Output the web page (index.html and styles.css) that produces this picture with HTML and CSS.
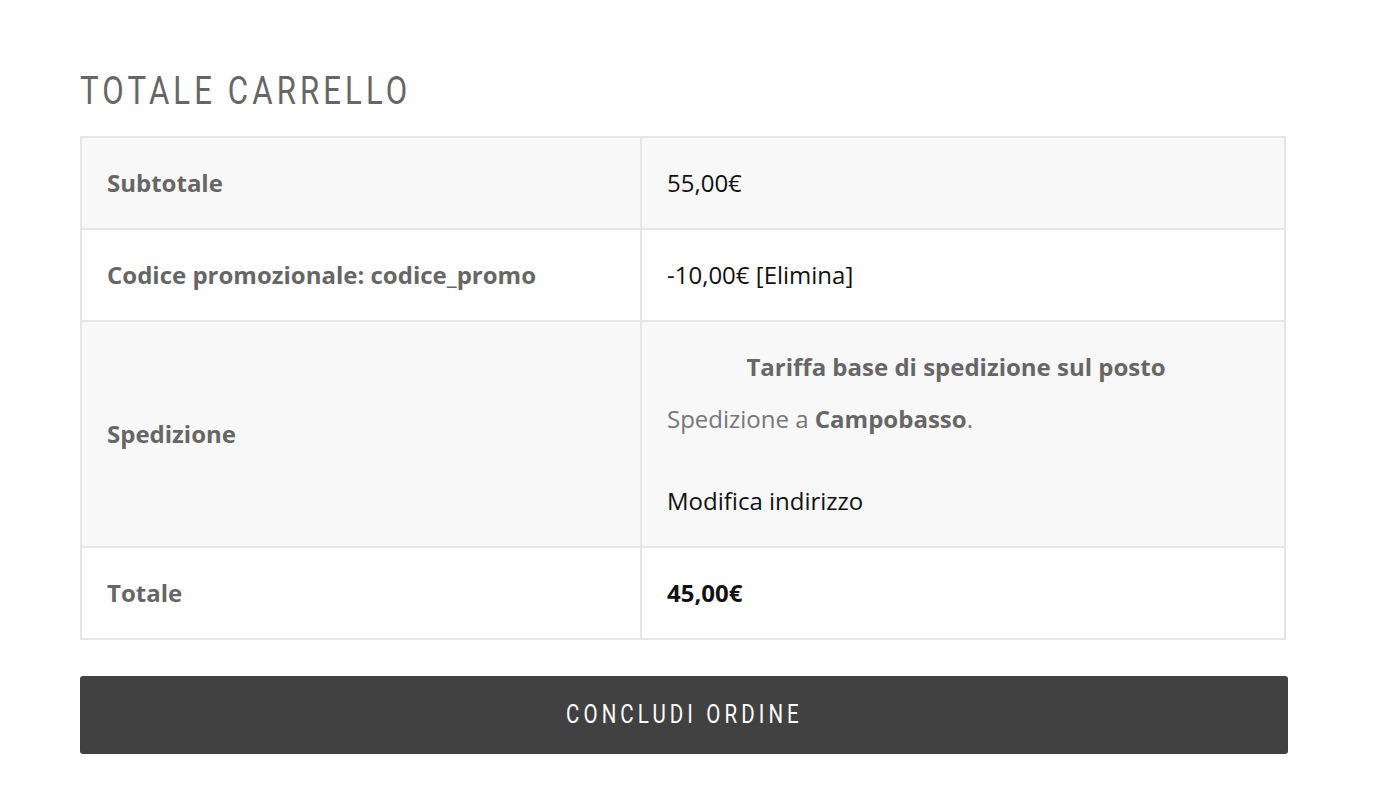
FILE: index.html
```html
<!DOCTYPE html>
<html lang="it">
<head>
  <meta charset="UTF-8" />
  <meta name="viewport" content="width=device-width, initial-scale=1" />
  <title>Totale carrello</title>
  <link rel="stylesheet" href="styles.css">
</head>
<body>
  <div class="cart-totals">
    <h2><span>Totale carrello</span></h2>

    <table class="totals-table">
      <tr class="odd">
        <th>Subtotale</th>
        <td>55,00€</td>
      </tr>
      <tr>
        <th>Codice promozionale: codice_promo</th>
        <td>-10,00€ [Elimina]</td>
      </tr>
      <tr class="odd">
        <th>Spedizione</th>
        <td>
          <div class="method">Tariffa base di spedizione sul posto</div>
          <p class="destination">Spedizione a <strong>Campobasso</strong>.</p>
          <a class="change-address" href="#">Modifica indirizzo</a>
        </td>
      </tr>
      <tr>
        <th>Totale</th>
        <td><strong class="total">45,00€</strong></td>
      </tr>
    </table>

    <a class="checkout-btn" href="#"><span>Concludi ordine</span></a>
  </div>
</body>
</html>
```

FILE: styles.css
```css
body {
  margin: 0;
  font-family: "Open Sans", Arial, sans-serif;
  background: #fff;
}
.cart-totals {
  padding: 70px 98px 40px 80px;
}
h2 {
  margin: 0 0 24px;
  font-family: Roboto, Arial, sans-serif;
  font-weight: 400;
  font-size: 38px;
  line-height: 42px;
  letter-spacing: 5px;
  text-transform: uppercase;
  color: #666;
}
/* narrow the letters, the theme uses a condensed face */
h2 span,
.checkout-btn span {
  display: inline-block;
  transform: scaleX(0.82);
}
h2 span {
  transform-origin: left center;
}
.totals-table {
  width: 1206px;
  border-collapse: collapse;
  border: 2px solid #e6e6e6;
  font-size: 24px;
  line-height: 30px;
}
.totals-table th,
.totals-table td {
  border: 2px solid #e6e6e6;
  padding: 30px 25px;
  text-align: left;
  vertical-align: middle;
}
.totals-table th {
  width: 508px;
  font-weight: 700;
  color: #666;
}
.totals-table td {
  color: #111;
}
.totals-table tr.odd {
  background: #f8f8f8;
}
.method {
  text-align: center;
  font-weight: 700;
  color: #666;
  margin-bottom: 22px;
  padding-right: 14px;
}
.destination {
  margin: 0 0 52px;
  color: #777;
}
.destination strong {
  color: #666;
}
.change-address {
  color: #111;
  text-decoration: none;
}
.total {
  color: #111;
}
.checkout-btn {
  display: block;
  margin-top: 36px;
  width: 1208px;
  height: 78px;
  line-height: 78px;
  background: #414141;
  border-radius: 3px;
  text-align: center;
  text-decoration: none;
  text-transform: uppercase;
  font-family: Roboto, Arial, sans-serif;
  font-size: 25px;
  letter-spacing: 5px;
  color: #fff;
}
```
